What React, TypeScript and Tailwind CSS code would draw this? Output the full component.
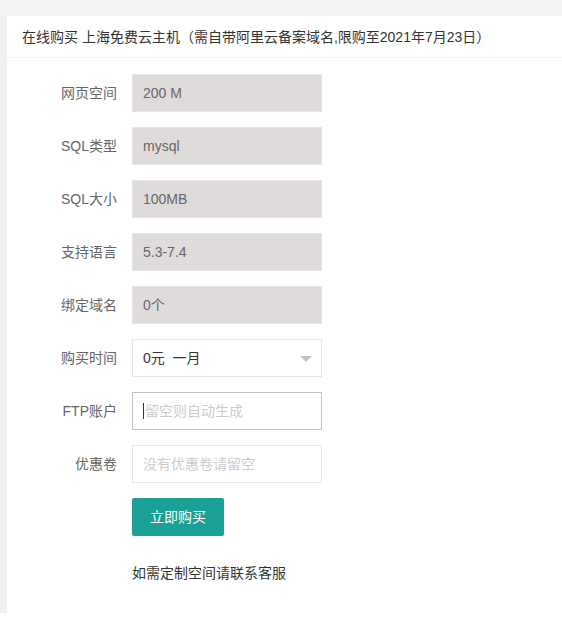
const font = { fontFamily: '"Helvetica Neue", Helvetica, "Liberation Sans", Arial, "Noto Sans CJK SC", sans-serif' }

const disabledRows = [
  { label: '网页空间', value: '200 M' },
  { label: 'SQL类型', value: 'mysql' },
  { label: 'SQL大小', value: '100MB' },
  { label: '支持语言', value: '5.3-7.4' },
  { label: '绑定域名', value: '0个' },
]

const Label = ({ children }: { children: string }) => (
  <label className="w-[110px] shrink-0 px-[15px] py-[9px] text-right text-[14px] leading-[20px] text-[#666]">
    {children}
  </label>
)

export default function App() {
  return (
    <div className="bg-[#f2f2f2] pt-[16px] pl-[7px] h-[613px] text-[14px] text-[#333]" style={font}>
      <div className="bg-white h-full">
        <div className="h-[42px] leading-[42px] px-[15px] border-b border-[#f6f6f6]">
          在线购买 上海免费云主机（需自带阿里云备案域名,限购至2021年7月23日）
        </div>
        <div className="px-[15px] pt-[16px]">
          {disabledRows.map((r) => (
            <div key={r.label} className="flex mb-[15px]">
              <Label>{r.label}</Label>
              <div className="w-[190px] h-[38px] leading-[36px] border border-[#e6e6e6] bg-[#e0dbdb] pl-[10px] text-[#666]">
                {r.value}
              </div>
            </div>
          ))}

          <div className="flex mb-[15px]">
            <Label>购买时间</Label>
            <div className="relative w-[190px] h-[38px] leading-[36px] border border-[#e6e6e6] bg-white pl-[10px] text-[#333]">
              0元&nbsp;&nbsp;一月
              <span className="absolute right-[9px] top-[16px] w-0 h-0 border-l-[6px] border-r-[6px] border-t-[6px] border-l-transparent border-r-transparent border-t-[#c2c2c2]" />
            </div>
          </div>

          <div className="flex mb-[15px]">
            <Label>FTP账户</Label>
            <div className="w-[190px] h-[38px] leading-[36px] border border-[#c2c2c2] bg-white pl-[10px] text-[#ccc] flex items-center">
              <span className="w-px h-[16px] bg-[#333] mr-[1px]" />
              留空则自动生成
            </div>
          </div>

          <div className="flex mb-[15px]">
            <Label>优惠卷</Label>
            <div className="w-[190px] h-[38px] leading-[36px] border border-[#e6e6e6] bg-white pl-[10px] text-[#ccc]">
              没有优惠卷请留空
            </div>
          </div>

          <div className="pl-[110px]">
            <button className="h-[38px] px-[18px] bg-[#1aa094] text-white rounded-[2px] text-[14px]">
              立即购买
            </button>
            <div className="mt-[27px] text-[#333]">如需定制空间请联系客服</div>
          </div>
        </div>
      </div>
    </div>
  )
}
